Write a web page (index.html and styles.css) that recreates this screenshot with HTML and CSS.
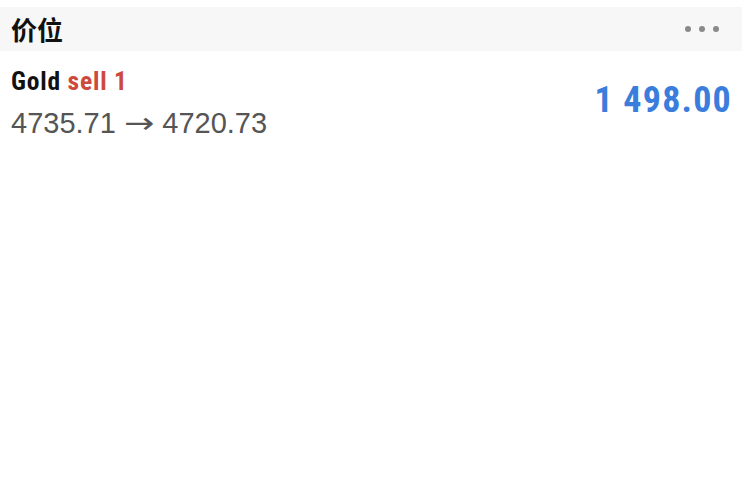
FILE: index.html
```html
<!DOCTYPE html>
<html lang="zh">
<head>
<meta charset="utf-8">
<link rel="stylesheet" href="styles.css">
</head>
<body>
<div class="panel">
  <div class="header">
    <span class="title">价位</span>
    <span class="more"><i></i><i></i><i></i></span>
  </div>
  <div class="row">
    <div class="info">
      <div class="name">Gold <span class="side">sell 1</span></div>
      <div class="prices">4735.71 <span class="arrow">→</span> 4720.73</div>
    </div>
    <div class="amount">1 498.00</div>
  </div>
</div>
</body>
</html>
```
FILE: styles.css
```css
html, body {
  margin: 0;
  padding: 0;
  background: #ffffff;
}
.panel {
  padding-top: 7px;
}
.header {
  height: 44px;
  background: #f7f7f7;
  display: flex;
  align-items: center;
  justify-content: space-between;
  padding: 0 23px 0 11px;
}
.title {
  font-family: "Noto Sans CJK SC", sans-serif;
  font-weight: 700;
  font-size: 26px;
  line-height: 30px;
  color: #111;
}
.more {
  display: flex;
  gap: 8px;
}
.more i {
  display: block;
  width: 6px;
  height: 6px;
  border-radius: 50%;
  background: #8a8a8a;
}
.row {
  display: flex;
  justify-content: space-between;
  align-items: flex-start;
  padding: 15px 10px 0 11px;
}
.name {
  font-family: "Roboto Condensed", "Roboto", sans-serif;
  font-stretch: 75%;
  font-weight: 700;
  font-size: 25.5px;
  letter-spacing: 0.8px;
  color: #111;
  line-height: 30px;
}
.side {
  color: #cc4a3c;
}
.prices {
  margin-top: 9px;
  font-family: "Liberation Sans", Arial, sans-serif;
  font-size: 29px;
  color: #555;
  line-height: 36px;
}
.arrow {
  display: inline-block;
  font-family: "DejaVu Sans", sans-serif;
  font-weight: 400;
  transform: scaleX(1.25);
  margin: 0 3px;
}
.amount {
  margin-top: 14px;
  font-family: "Roboto Condensed", "Roboto", sans-serif;
  font-stretch: 75%;
  font-weight: 700;
  font-size: 36px;
  letter-spacing: 1.2px;
  line-height: 40px;
  color: #3b7ddd;
}
```
